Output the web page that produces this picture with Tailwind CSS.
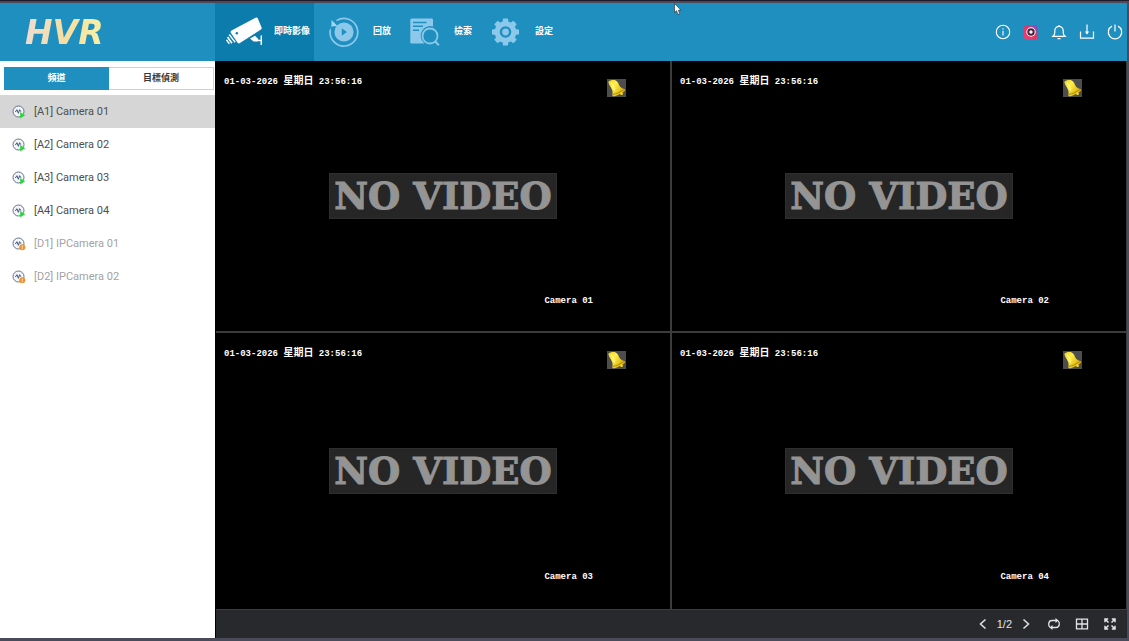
<!doctype html>
<html lang="zh-Hant">
  <head>
    <meta charset="UTF-8">
    <meta name="viewport" content="width=device-width, initial-scale=1">
    <title>HVR</title>
    <script src="https://cdn.jsdelivr.net/npm/@tailwindcss/browser@4"></script>
  </head>
  <body>

    <!-- shared icons (zero size instead of hidden, gradients need a rendered svg) -->
    <svg class="absolute size-0">
      <defs>
        <linearGradient id="brass" x1="0" y1="0" x2="1" y2=".6">
          <stop offset="0" stop-color="#f3cf1c"/>
          <stop offset=".4" stop-color="#fff04a"/>
          <stop offset="1" stop-color="#d8a800"/>
        </linearGradient>
      </defs>
      <symbol id="cam-live" viewBox="0 0 14 14">
        <circle cx="6.5" cy="6.5" r="5.5" fill="#f4f6fa" stroke="#66728c" stroke-width="1"/>
        <path d="M3.4 7l1.500-2.300 1.500 3.600 1.200-3.600 1.300 2" fill="none" stroke="#3f5478" stroke-width="1"/>
        <path d="M8.200 7v6.400l5-3.200z" fill="#2bd63c"/>
      </symbol>
      <symbol id="cam-alert" viewBox="0 0 14 14">
        <circle cx="6.5" cy="6.5" r="5.5" fill="#f4f6fa" stroke="#66728c" stroke-width="1"/>
        <path d="M3.4 7l1.500-2.300 1.500 3.600 1.200-3.600 1.300 2" fill="none" stroke="#3f5478" stroke-width="1"/>
        <circle cx="10.300" cy="10.300" r="3" fill="#f0922b"/>
        <path d="M10.300 8.500v2.200M10.300 11.300v1" stroke="#fff" stroke-width=".8"/>
      </symbol>
      <symbol id="alarm" viewBox="0 0 19 18">
        <path d="M0 0h19v18H0z" fill="#4d4d4d"/>
        <path d="M1.500 2.500C3.500.6 8 .3 9.800 2.200c2 2 2.200 4.800 4.200 6.300 1.300 1 4 1.300 4.200 2.300.3 1.300-3.200 3.200-6.200 4.700-2.600 1.300-5.500 2.300-6.300 1.500-.7-.8.3-3-.4-5.500C4.600 8.800 1 5 1.500 2.500z" fill="url(#brass)"/>
        <path d="M5.800 15.400c3.600-.5 8.200-2.600 10.800-4.900" fill="none" stroke="#a88200" stroke-width=".9"/>
        <path d="M4 3.500c1.600 2 3.300 4.500 3.600 8" fill="none" stroke="#fffbb0" stroke-width="1.200"/>
        <circle cx="14.500" cy="14.500" r="1.500" fill="#f4d21f"/>
      </symbol>
    </svg>

    <div class="h-screen flex flex-col bg-[#4a4b5a] border-t border-[#1f1b2b] pt-[2px] pr-[2px] pb-[3px] font-['Roboto','Noto_Sans_CJK_TC',sans-serif]">

      <header class="h-[58px] shrink-0 flex bg-[#1f8fc0] text-white">
        <div class="w-[215px] flex items-center pl-[25px]">
          <h1 class="font-['DejaVu_Sans',sans-serif] font-bold italic text-[33px] leading-none text-transparent bg-clip-text bg-linear-to-r from-[#eedcd0] via-[#f5dfa0] to-[#f8f3a8] pr-1">HVR</h1>
        </div>

        <nav class="flex text-[9px] font-bold whitespace-nowrap">
          <button type="button" class="flex items-center gap-[11px] pl-[11px] pr-1 bg-[#0b7cab]">
            <svg class="w-[37px] h-[30px]" viewBox="0 0 37 30" fill="none">
              <path d="M5.500 13.500 30 .6c.7-.4 1.200-.2 1.600.4l4 9.600c.3.800 0 1.500-.7 1.900L13.500 26.200c-.8.4-1.400.2-1.900-.5L4.800 15.800c-.5-.9-.3-1.700.7-2.300z" fill="#fff"/>
              <circle cx="10.800" cy="16.300" r="1.200" fill="#0b7cab"/>
              <path d="M3.300 17.500c1.800 2.500 3.500 5.200 5.900 7.700M1.600 20c1.300 2.200 2.600 4 4.400 6.200M.6 22.800c.8 1.500 1.600 2.600 2.800 4" stroke="#fff" stroke-width="1.500"/>
              <path d="M30 23.500h4.500M35.300 18.500v9.500" stroke="#fff" stroke-width="1.500"/>
              <path d="M24 21.500l5-2.800 3.500 3.500-1.500 2.300h-3.500z" fill="#fff"/>
            </svg>
            <span>即時影像</span>
          </button>

          <button type="button" class="flex items-center gap-[14px] pl-[15px] pr-1">
            <svg class="size-[30px]" viewBox="0 0 30 30" fill="none">
              <path d="M7.500 3.600A13.800 13.800 0 1 1 1.300 13" stroke="#8cc8ea" stroke-width="1.700"/>
              <path d="M1.300 13A13.800 13.800 0 0 1 5.500 5.200" stroke="#8cc8ea" stroke-width="1"  stroke-dasharray="1.500 1.500"/>
              <path d="M2.500 3v6.200h6.200z" fill="#a5d6f0"/>
              <circle cx="15" cy="15" r="9.600" fill="#8cc8ea"/>
              <path d="M12.800 11.200v7.600l5-3.800z" fill="#1f8fc0"/>
            </svg>
            <span>回放</span>
          </button>

          <button type="button" class="flex items-center gap-[14px] pl-[15px] pr-1">
            <svg class="size-[30px]" viewBox="0 0 30 30" fill="none">
              <path d="M2 1.500h19.500c1 0 1.500.5 1.500 1.500v6.500a9.500 9.500 0 0 0-9.500 15.800l.8 1.200H1.800C.8 26.500.3 26 .3 25V3.200C.3 2.200 1 1.500 2 1.500z" fill="#8cc8ea"/>
              <path d="M3 5.400h13.500M3 9.300h10M3 13.200h6" stroke="#1f8fc0" stroke-width="1.500"/>
              <circle cx="20" cy="19" r="7.500" stroke="#8cc8ea" stroke-width="1.800"/>
              <path d="M25.300 24.500l3.500 3.800" stroke="#8cc8ea" stroke-width="2"/>
            </svg>
            <span>檢索</span>
          </button>

          <button type="button" class="flex items-center gap-[14px] pl-[15px] pr-1">
            <svg class="size-[30px]" viewBox="0 0 30 30" fill="none">
              <g fill="#8cc8ea">
                <circle cx="14.500" cy="15" r="10.800"/>
                <path id="tooth" d="M11.500 6l.6-4.500h4.800l.6 4.500z"/>
                <use href="#tooth" transform="rotate(45 14.500 15)"/>
                <use href="#tooth" transform="rotate(90 14.500 15)"/>
                <use href="#tooth" transform="rotate(135 14.500 15)"/>
                <use href="#tooth" transform="rotate(180 14.500 15)"/>
                <use href="#tooth" transform="rotate(225 14.500 15)"/>
                <use href="#tooth" transform="rotate(270 14.500 15)"/>
                <use href="#tooth" transform="rotate(315 14.500 15)"/>
              </g>
              <circle cx="14.500" cy="15" r="4.600" stroke="#1f8fc0" stroke-width="2.400"/>
            </svg>
            <span>設定</span>
          </button>
        </nav>

        <div class="ml-auto flex items-center gap-3 pr-1">
          <button type="button" aria-label="Info">
            <svg class="size-4" viewBox="0 0 16 16" fill="none" stroke="#fff" stroke-width="1.100">
              <circle cx="8" cy="8" r="6.700"/>
              <path d="M8 6.800v4.700M8 4.300v1.300"/>
            </svg>
          </button>
          <button type="button" aria-label="App">
            <svg class="size-4" viewBox="0 0 16 16">
              <defs>
                <linearGradient id="app" x1="1" y1="0" x2="0" y2="1">
                  <stop offset="0" stop-color="#5a5fd8"/>
                  <stop offset=".45" stop-color="#e0356b"/>
                  <stop offset="1" stop-color="#f0406a"/>
                </linearGradient>
              </defs>
              <rect x="1" y="1" width="14" height="14.500" rx="3" fill="url(#app)"/>
              <circle cx="8" cy="8" r="4.700" fill="#fff"/>
              <circle cx="8" cy="8" r="2.700" fill="none" stroke="#4b1e3c" stroke-width="2"/>
            </svg>
          </button>
          <button type="button" aria-label="Alarm">
            <svg class="size-4" viewBox="0 0 16 16" fill="none" stroke="#fff" stroke-width="1.200">
              <path d="M2 12.300h12c-1.200-1-1.800-2-1.800-3.800V6.600a4.200 4.200 0 0 0-8.400 0v1.900c0 1.800-.6 2.800-1.800 3.800zM8 2.300V1M6.500 14.600h3"/>
            </svg>
          </button>
          <button type="button" aria-label="Download">
            <svg class="size-4" viewBox="0 0 16 16" fill="none" stroke="#fff" stroke-width="1.200">
              <path d="M1.500 7.500v6.700h13V7.500M8 .5v9"/>
              <path d="M5.800 7.500h4.400L8 10.500z" fill="#fff" stroke="none"/>
            </svg>
          </button>
          <button type="button" aria-label="Power">
            <svg class="size-4" viewBox="0 0 16 16" fill="none" stroke="#fff" stroke-width="1.200">
              <path d="M5 2.100a6.700 6.700 0 1 0 6 0M8 .5v7"/>
            </svg>
          </button>
        </div>
      </header>

      <div class="flex-1 min-h-0 flex">

        <aside class="w-[215px] shrink-0 bg-white">
          <div class="flex h-[34px] pt-[6px] pb-[5px] pl-1 pr-px text-[9px] font-bold">
            <button type="button" class="w-1/2 bg-[#1f8fc0] text-white">頻道</button>
            <button type="button" class="w-1/2 border border-l-0 border-[#d0d0d0] text-[#3a3a3a]">目標偵測</button>
          </div>

          <ul class="text-[11px] text-[#4e4e4e]">
            <li><button type="button" class="w-full h-[33px] flex items-center gap-[8px] pl-3 pt-px bg-[#d6d6d6]"><svg class="size-[14px]"><use href="#cam-live"/></svg>[A1] Camera 01</button></li>
            <li><button type="button" class="w-full h-[33px] flex items-center gap-[8px] pl-3 pt-px"><svg class="size-[14px]"><use href="#cam-live"/></svg>[A2] Camera 02</button></li>
            <li><button type="button" class="w-full h-[33px] flex items-center gap-[8px] pl-3 pt-px"><svg class="size-[14px]"><use href="#cam-live"/></svg>[A3] Camera 03</button></li>
            <li><button type="button" class="w-full h-[33px] flex items-center gap-[8px] pl-3 pt-px"><svg class="size-[14px]"><use href="#cam-live"/></svg>[A4] Camera 04</button></li>
            <li><button type="button" class="w-full h-[33px] flex items-center gap-[8px] pl-3 pt-px text-[#a3a3a3]"><svg class="size-[14px]"><use href="#cam-alert"/></svg>[D1] IPCamera 01</button></li>
            <li><button type="button" class="w-full h-[33px] flex items-center gap-[8px] pl-3 pt-px text-[#a3a3a3]"><svg class="size-[14px]"><use href="#cam-alert"/></svg>[D2] IPCamera 02</button></li>
          </ul>
        </aside>

        <main class="flex-1 flex flex-col border-l border-black">
          <!-- video wall -->
          <div class="flex-1 grid grid-cols-2 grid-rows-[270fr_276fr] gap-[2px] pr-px bg-[#3c3c3c] text-white text-[9px] leading-3 font-bold font-['Liberation_Mono','Noto_Sans_CJK_TC',monospace]">
            <section class="relative bg-black flex items-center justify-center">
              <time class="absolute top-[15px] left-2 whitespace-pre">01-03-2026 <span class="text-[10px]">星期日</span> 23:56:16</time>
              <svg class="absolute top-[18px] right-11 w-[19px] h-[18px]"><use href="#alarm"/></svg>
              <p class="h-[46px] px-1 flex items-center bg-[#262626] border border-[#2e2e2e] text-[#949494] text-[37px] leading-none whitespace-nowrap font-['DejaVu_Serif',serif] [-webkit-text-stroke:1px_#949494]">NO VIDEO</p>
              <span class="absolute bottom-6 right-[77px]">Camera 01</span>
            </section>
            <section class="relative bg-black flex items-center justify-center">
              <time class="absolute top-[15px] left-2 whitespace-pre">01-03-2026 <span class="text-[10px]">星期日</span> 23:56:16</time>
              <svg class="absolute top-[18px] right-11 w-[19px] h-[18px]"><use href="#alarm"/></svg>
              <p class="h-[46px] px-1 flex items-center bg-[#262626] border border-[#2e2e2e] text-[#949494] text-[37px] leading-none whitespace-nowrap font-['DejaVu_Serif',serif] [-webkit-text-stroke:1px_#949494]">NO VIDEO</p>
              <span class="absolute bottom-6 right-[77px]">Camera 02</span>
            </section>
            <section class="relative bg-black flex items-center justify-center">
              <time class="absolute top-[15px] left-2 whitespace-pre">01-03-2026 <span class="text-[10px]">星期日</span> 23:56:16</time>
              <svg class="absolute top-[18px] right-11 w-[19px] h-[18px]"><use href="#alarm"/></svg>
              <p class="h-[46px] px-1 flex items-center bg-[#262626] border border-[#2e2e2e] text-[#949494] text-[37px] leading-none whitespace-nowrap font-['DejaVu_Serif',serif] [-webkit-text-stroke:1px_#949494]">NO VIDEO</p>
              <span class="absolute bottom-[26px] right-[77px]">Camera 03</span>
            </section>
            <section class="relative bg-black flex items-center justify-center">
              <time class="absolute top-[15px] left-2 whitespace-pre">01-03-2026 <span class="text-[10px]">星期日</span> 23:56:16</time>
              <svg class="absolute top-[18px] right-11 w-[19px] h-[18px]"><use href="#alarm"/></svg>
              <p class="h-[46px] px-1 flex items-center bg-[#262626] border border-[#2e2e2e] text-[#949494] text-[37px] leading-none whitespace-nowrap font-['DejaVu_Serif',serif] [-webkit-text-stroke:1px_#949494]">NO VIDEO</p>
              <span class="absolute bottom-[26px] right-[77px]">Camera 04</span>
            </section>
          </div>

          <footer class="h-[29px] shrink-0 flex items-center justify-end gap-[14px] pr-[10px] bg-[#28292d] border-t border-[#3c3c3c] text-[#e4e4e4]">
            <div class="flex items-center gap-[7px]">
              <button type="button" aria-label="Previous page">
                <svg class="size-[14px]" viewBox="0 0 14 14" fill="none" stroke="currentColor" stroke-width="1.500"><path d="M9.500 2.500l-5 4.500 5 4.500"/></svg>
              </button>
              <span class="text-[11px] leading-none font-['Liberation_Sans',sans-serif]">1/2</span>
              <button type="button" aria-label="Next page">
                <svg class="size-[14px]" viewBox="0 0 14 14" fill="none" stroke="currentColor" stroke-width="1.500"><path d="M4.500 2.500l5 4.500-5 4.500"/></svg>
              </button>
            </div>
            <button type="button" aria-label="Auto switch">
              <svg class="size-[14px]" viewBox="0 0 14 14" fill="none" stroke="currentColor" stroke-width="1.300">
                <path d="M3 10.300C1 8.800 1 3.500 5 3.500h4.500M11 3.700c2 1.500 2 6.800-2 6.800H4.500"/>
                <path d="M8.500 1v5l3-2.500zM5.500 8v5l-3-2.500z" fill="currentColor" stroke="none"/>
              </svg>
            </button>
            <button type="button" aria-label="Layout">
              <svg class="size-[14px]" viewBox="0 0 14 14" fill="none" stroke="currentColor" stroke-width="1.300"><path d="M1.500 2.200h11v9.600h-11zM7 2.200v9.600M1.500 7h11"/></svg>
            </button>
            <button type="button" aria-label="Full screen">
              <svg class="size-[14px]" viewBox="0 0 14 14" fill="none" stroke="currentColor" stroke-width="1.500">
                <path d="M2 5.200V2h3.200M8.800 2H12v3.200M12 8.800V12H8.800M5.200 12H2V8.800M2 2l3.500 3.500M12 2L8.500 5.500M12 12L8.500 8.500M2 12l3.500-3.500"/>
              </svg>
            </button>
          </footer>
        </main>

      </div>
    </div>

    <!-- mouse pointer -->
    <svg class="absolute top-[3px] left-[674px] w-[8px] h-[12px]" viewBox="0 0 8 12"><path d="M.5.500v9l2-1.800L4 11.500l1.800-.8L4.300 7.200H7z" fill="#fff" stroke="#222" stroke-width=".6"/></svg>

  </body>
</html>
